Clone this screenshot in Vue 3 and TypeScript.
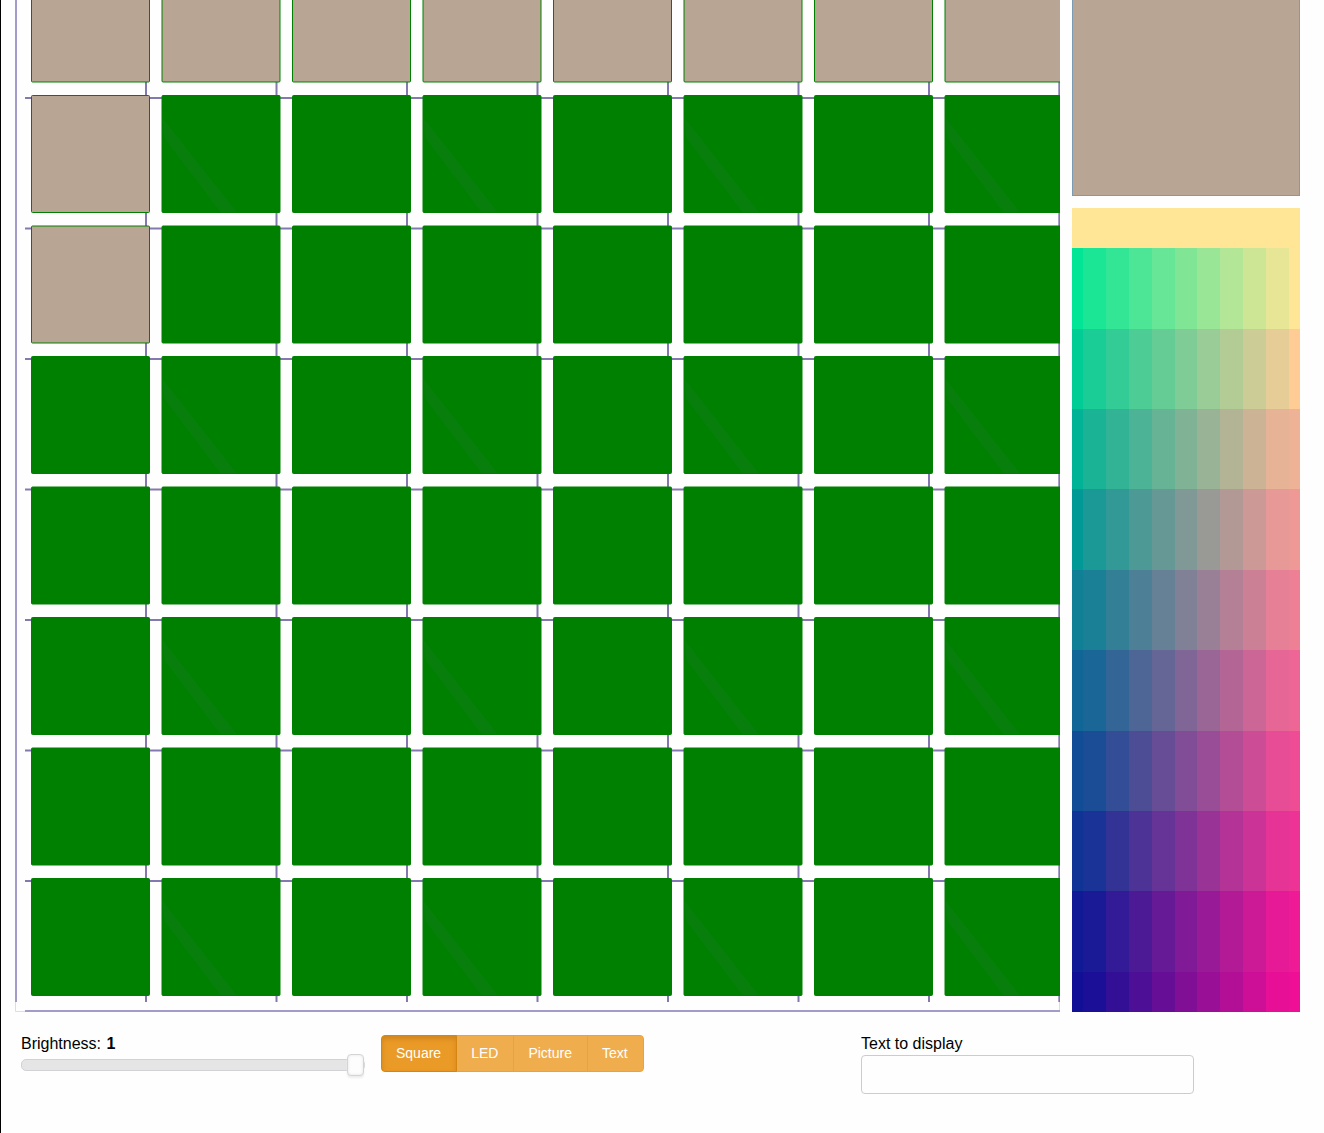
<script setup lang="ts">
import { ref } from 'vue'

interface Cell {
  key: string
  x: number
  y: number
  lit: boolean
  shine: boolean
}

const PITCH = 130.5
const steps = [0, 1, 2, 3, 4, 5, 6, 7]

const cells: Cell[] = steps.flatMap((row) =>
  steps.map((col) => ({
    key: `${row}-${col}`,
    x: 31 + col * PITCH,
    y: -35.5 + row * PITCH,
    lit: row === 0 || (col === 0 && row < 3),
    shine: row % 2 === 1 && col % 2 === 1,
  })),
)

// Red grows to the right, green fades towards the bottom, blue stays fixed.
function shade(row: number, col: number): string {
  if (row === 0) return 'rgb(255, 229, 150)'
  const low = row > 4 ? 16 : 0
  const high = row > 2 ? 238 : 255
  const red = Math.min(high, Math.max(low, Math.round(col * 25.5)))
  const green = Math.max(15, Math.round(255 - row * 25.5))
  return `rgb(${red}, ${green}, 150)`
}

const palette = Array.from({ length: 11 }, (_, row) =>
  Array.from({ length: 11 }, (_, col) => shade(row, col)),
)

const modes = ['Square', 'LED', 'Picture', 'Text']
const mode = ref('Square')
const brightness = ref(1)
const message = ref('')
</script>

<template>
  <main class="page">
    <section class="board">
      <svg class="matrix" viewBox="15 0 1045 1012" role="img" aria-label="LED matrix">
        <path class="edge" d="M15.5 1002V1011.5H1059.5V1002" />
        <path class="frame" d="M16 0V1002M1059.5 0V1002" />
        <path class="frame" d="M25 1011H1060" />
        <g class="wires">
          <path v-for="n in steps" :key="`v${n}`" :d="`M${146 + n * PITCH} 0V1002`" />
          <path v-for="n in steps.slice(0, 7)" :key="`h${n}`" :d="`M25 ${98 + n * PITCH}H1060`" />
        </g>
        <g v-for="cell in cells" :key="cell.key" :transform="`translate(${cell.x} ${cell.y})`">
          <rect class="cell" :class="{ lit: cell.lit }" x="0.5" y="0.5" width="118" height="117" rx="1" />
          <polygon v-if="cell.shine" class="shine" points="1,23 75,117 59,117 3,43" />
        </g>
      </svg>
      <aside class="side">
        <div class="swatch"></div>
        <div class="palette">
          <template v-for="(row, r) in palette" :key="r">
            <span v-for="(color, c) in row" :key="c" :style="{ background: color }"></span>
          </template>
        </div>
      </aside>
    </section>

    <section class="controls">
      <div class="level">
        <label for="brightness">Brightness: <b>{{ brightness }}</b></label>
        <input id="brightness" v-model.number="brightness" type="range" min="0" max="1" step="0.01" />
      </div>
      <div>
        <div class="modes">
          <button
            v-for="name in modes"
            :key="name"
            type="button"
            :class="{ active: mode === name }"
            @click="mode = name"
          >{{ name }}</button>
        </div>
      </div>
      <div>
        <label for="message">Text to display</label>
        <input id="message" v-model="message" type="text" />
      </div>
    </section>
  </main>
</template>

<style>
body {
  background: #fefefe;
}
</style>

<style scoped>
.page {
  box-sizing: border-box;
  min-height: 100vh;
  border-left: 1px solid #000;
  font-family: "Liberation Sans", Arial, sans-serif;
  font-size: 16px;
  line-height: 22px;
  color: #000;
}

.board {
  display: flex;
  gap: 12px;
  padding: 0 24px 0 14px;
}

.matrix {
  display: block;
  flex: 1;
  min-width: 0;
}

.edge,
.frame,
.wires {
  fill: none;
}

.edge {
  stroke: #dedede;
}

.frame {
  stroke: #a49cc8;
  stroke-width: 2px;
}

.wires {
  stroke: #8478b0;
  stroke-width: 2px;
}

.cell {
  fill: #008000;
  stroke: #008000;
}

.cell.lit {
  fill: #b8a594;
}

.shine {
  fill: #087f0c;
}

.side {
  display: flex;
  flex-direction: column;
  gap: 12px;
  width: 228px;
}

.swatch {
  box-sizing: border-box;
  height: 196px;
  border: 1px solid #7d9bb0;
  border-top: 0;
  background: #b8a594;
}

.palette {
  display: grid;
  flex: 1;
  grid-template-columns: 1fr repeat(9, 2fr) 1fr;
  grid-template-rows: 1fr repeat(9, 2fr) 1fr;
}

.controls {
  display: grid;
  grid-template-columns: 360fr 480fr 463fr;
  padding: 19px 0 39px 20px;
}

.level {
  padding-right: 16px;
}

label {
  display: block;
  padding-top: 2px;
}

label b {
  margin-left: 1px;
}

input[type="range"] {
  display: block;
  appearance: none;
  width: 100%;
  height: 20px;
  margin: 0;
  background: transparent;
}

input[type="range"]::-webkit-slider-runnable-track {
  box-sizing: border-box;
  height: 12px;
  border: 1px solid #d2d2d6;
  border-radius: 5px;
  background: #e5e5e5;
}

input[type="range"]::-webkit-slider-thumb {
  appearance: none;
  box-sizing: border-box;
  width: 17px;
  height: 22px;
  margin-top: -6px;
  border: 1px solid #d4d4d4;
  border-radius: 4px;
  background: #fdfdfd;
  box-shadow: inset 0 0 3px #e2e2e2, 0 2px 2px #ececec;
}

.modes {
  display: inline-flex;
  margin-top: 4px;
}

.modes button {
  height: 37px;
  margin: 0 0 0 -1px;
  padding: 0 15px 2px 14px;
  border: 1px solid #eea236;
  background: #f0ad4e;
  color: #fff;
  font-family: inherit;
  font-size: 14px;
  line-height: 20px;
}

.modes button:first-child {
  margin-left: 0;
  border-radius: 4px 0 0 4px;
}

.modes button:last-child {
  border-radius: 0 4px 4px 0;
}

.modes button.active {
  position: relative;
  border-color: #d58512;
  background: #ea9a26;
  box-shadow: inset 0 3px 5px #d0851e;
}

input[type="text"] {
  display: block;
  box-sizing: border-box;
  width: 72%;
  height: 39px;
  padding: 6px 12px;
  border: 1px solid #ccc;
  border-radius: 4px;
  background: #fefefe;
  font: inherit;
}
</style>
